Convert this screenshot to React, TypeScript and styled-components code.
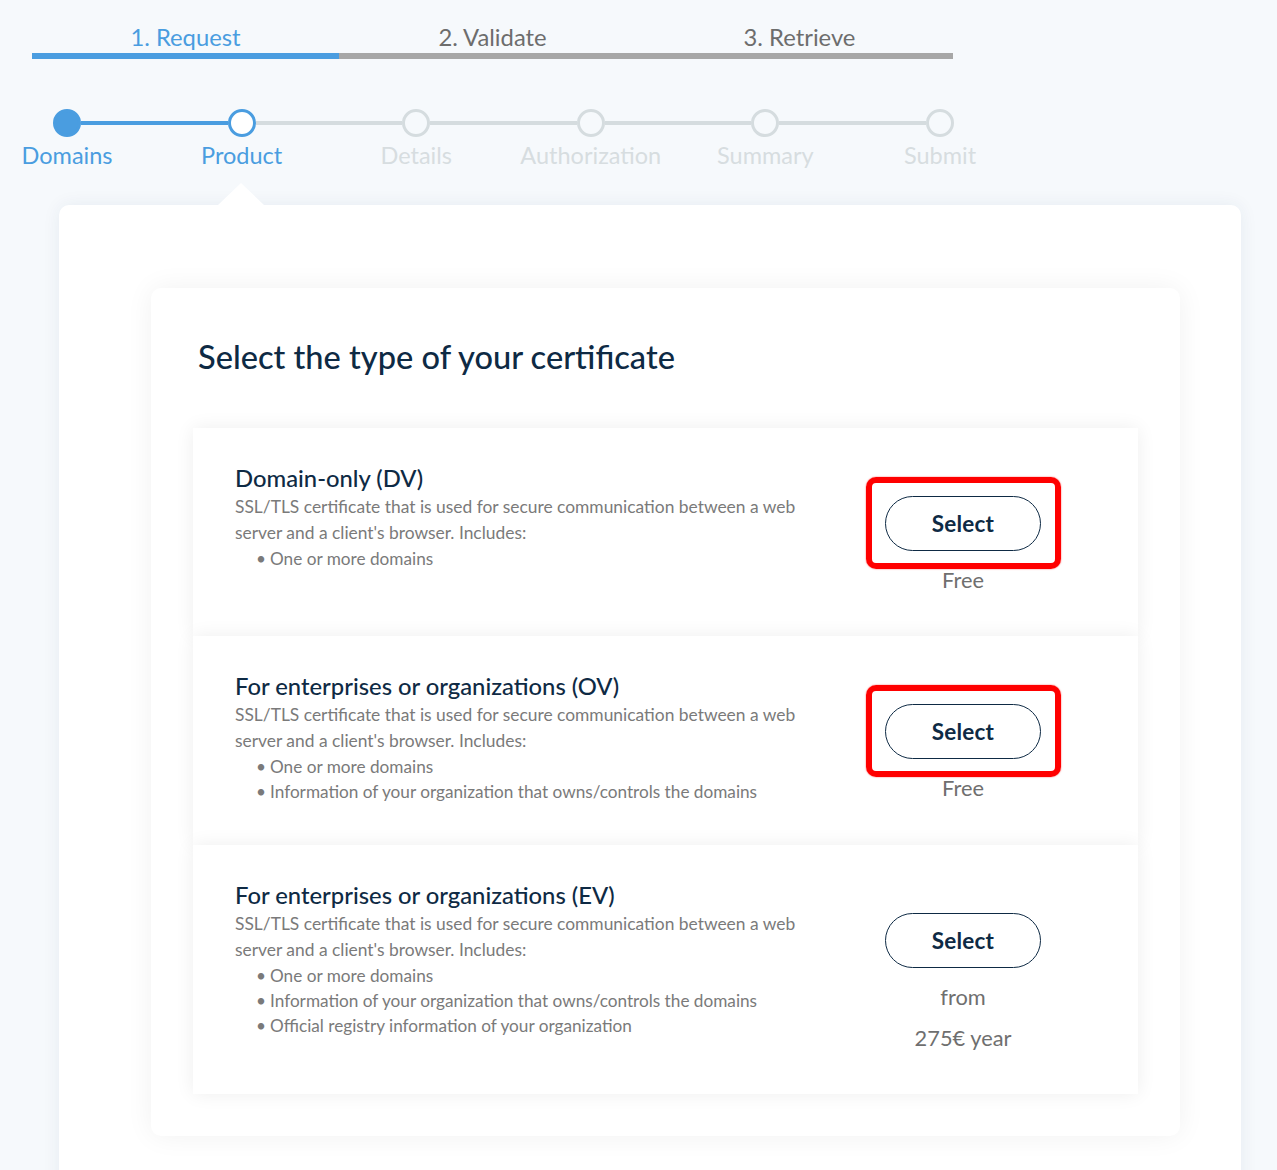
import React from "react";
import styled, { createGlobalStyle, css } from "styled-components";

const GlobalStyle = createGlobalStyle`
  html, body {
    margin: 0;
    padding: 0;
    background: #f6f9fc;
    font-family: Lato, "Open Sans", "Liberation Sans", sans-serif;
  }
  * { box-sizing: border-box; }
`;

const BLUE = "#4a9de0";
const NAVY = "#0e2a44";

const Page = styled.div`
  padding: 24px 0 0 32px;
  overflow: hidden;
`;

const Tabs = styled.div`
  display: grid;
  grid-template-columns: repeat(3, 1fr);
  width: 921px;
`;

const Tab = styled.div<{ $active?: boolean }>`
  display: flex;
  flex-direction: column;
  align-items: center;
  color: ${(p) => (p.$active ? BLUE : "#6d6d6d")};
`;

const TabLabel = styled.div`
  font-size: 23.8px;
  line-height: 26px;
  margin-bottom: 3px;
`;

const TabBar = styled.div<{ $active?: boolean }>`
  align-self: stretch;
  height: 6px;
  background: ${(p) => (p.$active ? BLUE : "#a7a7a7")};
`;

const Stepper = styled.div`
  display: flex;
  align-items: flex-start;
  width: 901px;
  margin: 50px 0 0 21px;
`;

type StepState = "done" | "current" | "todo";

const Step = styled.div`
  display: flex;
  flex-direction: column;
  align-items: center;
  width: 28px;
  flex: none;
`;

const Dot = styled.div<{ $state: StepState }>`
  width: 28px;
  height: 28px;
  border-radius: 50%;
  border: 3px solid ${(p) => (p.$state === "todo" ? "#d5dcdf" : BLUE)};
  background: ${(p) => (p.$state === "done" ? BLUE : "#ffffff")};
  ${(p) =>
    p.$state === "todo" &&
    css`
      background: transparent;
    `}
`;

const StepLabel = styled.div<{ $state: StepState }>`
  margin-top: 5px;
  font-size: 23.5px;
  line-height: 26px;
  white-space: nowrap;
  color: ${(p) => (p.$state === "todo" ? "#d7dde0" : BLUE)};
`;

const Connector = styled.div<{ $active?: boolean }>`
  flex: 1;
  height: 4px;
  margin-top: 12px;
  background: ${(p) => (p.$active ? BLUE : "#d5dcdf")};
`;

const Panel = styled.div`
  position: relative;
  width: 1182px;
  margin: 37px 0 0 27px;
  padding: 83px 61px 60px 92px;
  background: #ffffff;
  border-radius: 10px;
  box-shadow: 0 0 18px rgba(30, 60, 100, 0.07);

  &::before {
    content: "";
    position: absolute;
    top: -22px;
    left: 159px;
    border-left: 23px solid transparent;
    border-right: 23px solid transparent;
    border-bottom: 22px solid #ffffff;
  }
`;

const Card = styled.div`
  background: #ffffff;
  border-radius: 10px;
  padding: 51px 42px 42px;
  box-shadow: 0 0 28px rgba(0, 0, 0, 0.06);
`;

const Heading = styled.h1`
  margin: 0 0 53px 5px;
  font-size: 32.6px;
  line-height: 36px;
  font-weight: 500;
  color: ${NAVY};
`;

const List = styled.div`
  display: flex;
  flex-direction: column;
`;

const Row = styled.div`
  position: relative;
  display: flex;
  align-items: flex-start;
  padding: 35px 75px 41px 42px;
  background: #ffffff;
  box-shadow: 0 0 18px rgba(0, 0, 0, 0.07);
`;

const Info = styled.div`
  width: 580px;
`;

const Title = styled.h2`
  margin: 0;
  font-size: 23.8px;
  line-height: 31px;
  font-weight: 500;
  color: ${NAVY};
`;

const Desc = styled.p`
  margin: 0;
  font-size: 17.4px;
  line-height: 26px;
  color: #7a7a7a;
`;

const Bullets = styled.ul`
  list-style: none;
  margin: 0;
  padding: 0 0 0 21px;
`;

const Bullet = styled.li`
  font-size: 17.2px;
  line-height: 25px;
  color: #7a7a7a;

  &::before {
    content: "•";
    display: inline-block;
    width: 14px;
  }
`;

const Side = styled.div`
  margin-left: auto;
  width: 200px;
  padding-top: 33px;
  display: flex;
  flex-direction: column;
  align-items: center;
`;

const ButtonWrap = styled.div`
  position: relative;
`;

const SelectButton = styled.button`
  display: block;
  width: 156px;
  height: 55px;
  border: 1px solid ${NAVY};
  border-radius: 28px;
  background: #ffffff;
  color: ${NAVY};
  font-family: inherit;
  font-size: 22.5px;
  font-weight: 700;
  letter-spacing: 0.2px;
  cursor: pointer;
`;

const Highlight = styled.div`
  position: absolute;
  top: -19px;
  left: -19px;
  right: -20px;
  bottom: -18px;
  border: 6px solid #ff0000;
  border-radius: 10px;
  box-shadow: 0 0 1.5px rgba(255, 0, 0, 0.8);
  pointer-events: none;
`;

const Price = styled.div<{ $second?: boolean }>`
  margin-top: ${(p) => (p.$second ? "11px" : "14px")};
  font-size: 21.8px;
  line-height: 30px;
  color: #6f6f6f;
`;

type Product = {
  title: string;
  bullets: string[];
  price: string[];
  highlighted: boolean;
};

const products: Product[] = [
  {
    title: "Domain-only (DV)",
    bullets: ["One or more domains"],
    price: ["Free"],
    highlighted: true,
  },
  {
    title: "For enterprises or organizations (OV)",
    bullets: [
      "One or more domains",
      "Information of your organization that owns/controls the domains",
    ],
    price: ["Free"],
    highlighted: true,
  },
  {
    title: "For enterprises or organizations (EV)",
    bullets: [
      "One or more domains",
      "Information of your organization that owns/controls the domains",
      "Official registry information of your organization",
    ],
    price: ["from", "275€ year"],
    highlighted: false,
  },
];

const steps: { label: string; state: StepState }[] = [
  { label: "Domains", state: "done" },
  { label: "Product", state: "current" },
  { label: "Details", state: "todo" },
  { label: "Authorization", state: "todo" },
  { label: "Summary", state: "todo" },
  { label: "Submit", state: "todo" },
];

export default function App() {
  return (
    <>
      <GlobalStyle />
      <Page>
        <Tabs>
          {["1. Request", "2. Validate", "3. Retrieve"].map((t, i) => (
            <Tab key={t} $active={i === 0}>
              <TabLabel>{t}</TabLabel>
              <TabBar $active={i === 0} />
            </Tab>
          ))}
        </Tabs>

        <Stepper>
          {steps.map((s, i) => (
            <React.Fragment key={s.label}>
              {i > 0 && <Connector $active={i === 1} />}
              <Step>
                <Dot $state={s.state} />
                <StepLabel $state={s.state}>{s.label}</StepLabel>
              </Step>
            </React.Fragment>
          ))}
        </Stepper>

        <Panel>
          <Card>
            <Heading>Select the type of your certificate</Heading>
            <List>
              {products.map((p) => (
                <Row key={p.title}>
                  <Info>
                    <Title>{p.title}</Title>
                    <Desc>
                      SSL/TLS certificate that is used for secure communication
                      between a web server and a client's browser. Includes:
                    </Desc>
                    <Bullets>
                      {p.bullets.map((b) => (
                        <Bullet key={b}>{b}</Bullet>
                      ))}
                    </Bullets>
                  </Info>
                  <Side>
                    <ButtonWrap>
                      <SelectButton>Select</SelectButton>
                      {p.highlighted && <Highlight />}
                    </ButtonWrap>
                    {p.price.map((line, i) => (
                      <Price key={line} $second={i > 0}>
                        {line}
                      </Price>
                    ))}
                  </Side>
                </Row>
              ))}
            </List>
          </Card>
        </Panel>
      </Page>
    </>
  );
}
